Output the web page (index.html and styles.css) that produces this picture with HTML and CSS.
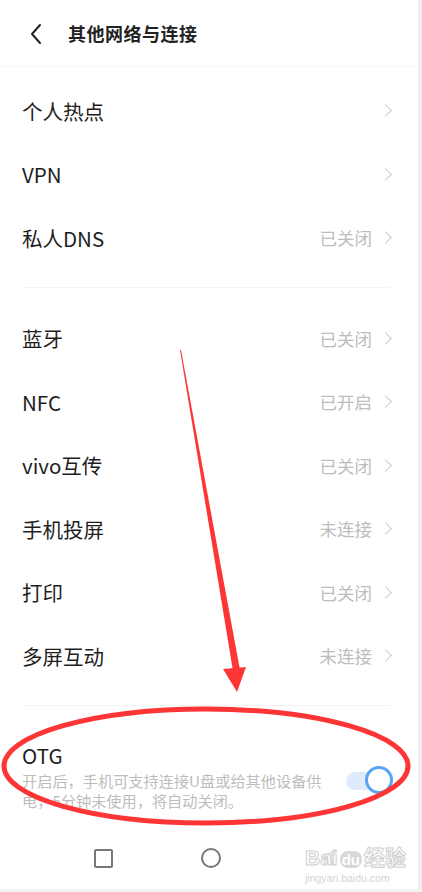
FILE: index.html
```html
<!DOCTYPE html>
<html lang="zh-CN">
<head>
    <meta charset="UTF-8">
    <meta name="viewport" content="width=device-width, initial-scale=1.0">
    <title>其他网络与连接</title>
    <link rel="stylesheet" href="styles.css">
</head>
<body>
    <div class="screen">
        <header class="top-bar">
            <svg class="back" width="14" height="22" viewBox="0 0 14 22">
                <path d="M11 2 L3 11 L11 20" fill="none" stroke="#222" stroke-width="2" stroke-linecap="round" stroke-linejoin="round"/>
            </svg>
            <h1>其他网络与连接</h1>
        </header>

        <ul class="group first">
            <li class="row"><span class="label">个人热点</span><span class="chev"></span></li>
            <li class="row"><span class="label">VPN</span><span class="chev"></span></li>
            <li class="row"><span class="label">私人DNS</span><span class="value">已关闭</span><span class="chev"></span></li>
        </ul>

        <div class="divider"></div>

        <ul class="group">
            <li class="row"><span class="label">蓝牙</span><span class="value">已关闭</span><span class="chev"></span></li>
            <li class="row"><span class="label">NFC</span><span class="value">已开启</span><span class="chev"></span></li>
            <li class="row"><span class="label">vivo互传</span><span class="value">已关闭</span><span class="chev"></span></li>
            <li class="row"><span class="label">手机投屏</span><span class="value">未连接</span><span class="chev"></span></li>
            <li class="row"><span class="label">打印</span><span class="value">已关闭</span><span class="chev"></span></li>
            <li class="row"><span class="label">多屏互动</span><span class="value">未连接</span><span class="chev"></span></li>
        </ul>

        <div class="divider"></div>

        <div class="otg">
            <div class="otg-text">
                <div class="label">OTG</div>
                <p class="desc">开启后，手机可支持连接U盘或给其他设备供电，5分钟未使用，将自动关闭。</p>
            </div>
            <div class="toggle"><span class="knob"></span></div>
        </div>

        <nav class="nav-bar">
            <span class="nav-square"></span>
            <span class="nav-circle"></span>
            <span class="nav-back"></span>
        </nav>

        <!-- watermark -->
        <div class="watermark">
            <span class="wm-big">Bai<span class="wm-du">du</span>经验</span>
            <span class="wm-small">jingyan.baidu.com</span>
        </div>

        <!-- annotation drawn on top of the screenshot -->
        <svg class="annot" width="422" height="892" viewBox="0 0 422 892">
            <polygon points="180,350 181,350 240,670 233,671" fill="#fd3535"/>
            <polygon points="223,669 246,667 237,692" fill="#fd3535"/>
            <ellipse cx="206" cy="766" rx="202" ry="57" fill="none" stroke="#fd3535" stroke-width="5"/>
        </svg>
    </div>
</body>
</html>
```

FILE: styles.css
```css
body {
    margin: 0;
    background-color: #fff;
    font-family: "Noto Sans CJK SC", "Noto Sans", sans-serif;
    color: #222;
}

.screen {
    position: relative;
    width: 418px;
    height: 889px;
    border-right: 4px solid #efefef;
    border-bottom: 3px solid #f2f2f2;
    overflow: hidden;
    background-color: #fff;
}

/* Header */
.top-bar {
    height: 67px;
    display: flex;
    align-items: center;
    padding-left: 29px;
    border-bottom: 1px solid #f6f6f6;
    box-sizing: border-box;
}

.back {
    margin-right: 25px;
    margin-top: 1px;
}

.top-bar h1 {
    margin: 0;
    font-size: 18px;
    font-weight: bold;
    color: #222;
    letter-spacing: 0.5px;
}

/* Rows */
.group {
    list-style: none;
    margin: 0;
    padding: 0;
}

.group.first {
    padding-top: 12px;
}

.row {
    height: 63.5px;
    display: flex;
    align-items: center;
    padding: 0 24px 0 22px;
}

.label {
    font-size: 20.5px;
    color: #1e1e1e;
    flex: 1;
}

.value {
    font-size: 17.5px;
    color: #bdbdbd;
    margin-right: 9px;
}

.chev {
    width: 8px;
    height: 8px;
    border-top: 1.5px solid #c8c8c8;
    border-right: 1.5px solid #c8c8c8;
    transform: rotate(45deg);
    margin-right: 4px;
}

.divider {
    height: 1px;
    background-color: #f3f3f3;
    margin: 17px 28px 19px 22px;
}

/* OTG */
.otg {
    display: flex;
    align-items: center;
    padding: 15px 28px 0 22px;
}

.otg-text .label {
    font-size: 20.5px;
    line-height: 30px;
}

.desc {
    margin: 0;
    width: 322px;
    font-size: 15.2px;
    line-height: 20px;
    color: #bdbdbd;
}

.toggle {
    position: relative;
    width: 44px;
    height: 18px;
    border-radius: 9px;
    background-color: #deebfb;
    margin-left: auto;
    margin-top: 12px;
}

.knob {
    position: absolute;
    right: -3px;
    top: -6px;
    width: 22px;
    height: 22px;
    border-radius: 50%;
    border: 3px solid #5aa3f5;
    background-color: #fff;
}

/* Bottom navigation */
.nav-bar {
    position: absolute;
    left: 0;
    right: 0;
    bottom: 0;
    height: 50px;
    display: flex;
    align-items: center;
    padding-bottom: 6px;
}

.nav-square {
    width: 15px;
    height: 15px;
    border: 2px solid #777;
    border-radius: 2px;
    margin-left: 94px;
}

.nav-circle {
    width: 16px;
    height: 16px;
    border: 2px solid #777;
    border-radius: 50%;
    margin-left: 88px;
}

.nav-back {
    width: 0;
    height: 0;
    border-top: 8px solid transparent;
    border-bottom: 8px solid transparent;
    border-right: 12px solid #e6e6e6;
    margin-left: 100px;
}

.watermark {
    position: absolute;
    left: 305px;
    top: 846px;
    display: flex;
    flex-direction: column;
    color: #d4d4d4;
    font-family: "Liberation Sans", "Noto Sans CJK SC", sans-serif;
}

.wm-big {
    font-size: 21px;
    font-weight: bold;
    line-height: 24px;
    color: #fff;
    -webkit-text-stroke: 1px #cfcfcf;
}

.wm-du {
    font-size: 15px;
    background-color: #d8d8d8;
    color: #fff;
    -webkit-text-stroke: 0;
    border-radius: 8px;
    padding: 0 2px;
    margin: 0 2px;
}

.wm-small {
    font-size: 10.5px;
    line-height: 12px;
    color: #d4d4d4;
}

.annot {
    position: absolute;
    left: 0;
    top: 0;
    pointer-events: none;
}
```
